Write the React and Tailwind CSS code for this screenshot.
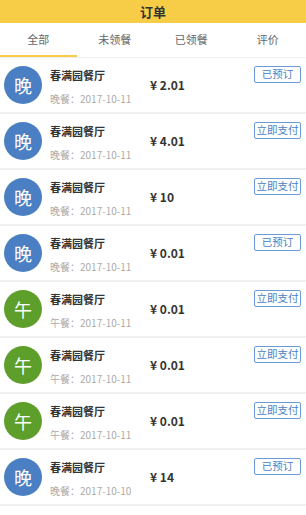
const orders = [
  { meal: "晚", label: "晚餐", date: "2017-10-11", price: "2.01", status: "已预订" },
  { meal: "晚", label: "晚餐", date: "2017-10-11", price: "4.01", status: "立即支付" },
  { meal: "晚", label: "晚餐", date: "2017-10-11", price: "10", status: "立即支付" },
  { meal: "晚", label: "晚餐", date: "2017-10-11", price: "0.01", status: "已预订" },
  { meal: "午", label: "午餐", date: "2017-10-11", price: "0.01", status: "立即支付" },
  { meal: "午", label: "午餐", date: "2017-10-11", price: "0.01", status: "立即支付" },
  { meal: "午", label: "午餐", date: "2017-10-11", price: "0.01", status: "立即支付" },
  { meal: "晚", label: "晚餐", date: "2017-10-10", price: "14", status: "已预订" },
];

const tabs = ["全部", "未领餐", "已领餐", "评价"];

export default function App() {
  return (
    <div
      className="w-[306px] h-[515px] overflow-hidden bg-white"
      style={{ fontFamily: '"Noto Sans CJK SC", "Noto Sans", sans-serif' }}
    >
      <div className="h-[23px] bg-[#f7cd47] flex items-center justify-center text-[13px] font-bold text-[#333]">
        订单
      </div>
      <div className="flex h-[35px] border-b border-[#eeeeee]">
        {tabs.map((t, i) => (
          <div
            key={t}
            className={`flex-1 flex items-center justify-center text-[11px] text-[#666] border-b-2 ${i === 0 ? "border-[#f7cd47]" : "border-transparent"}`}
          >
            {t}
          </div>
        ))}
      </div>
      {orders.map((o, i) => (
        <div key={i} className="flex h-[56px] border-b-2 border-[#f0f0f0]">
          <div
            className={`ml-[4px] mt-[8px] w-[38px] h-[38px] rounded-full flex items-center justify-center text-white text-[18px] ${o.meal === "午" ? "bg-[#5e9f2b]" : "bg-[#4a80c3]"}`}
          >
            {o.meal}
          </div>
          <div className="ml-[8px] w-[100px] flex flex-col pt-[9px]">
            <div className="text-[11px] font-bold text-[#333] leading-[16px]">春满园餐厅</div>
            <div className="text-[10px] text-[#aaa] leading-[14px] mt-[9px]">
              {o.label}：{o.date}
            </div>
          </div>
          <div className="flex items-center text-[12px] font-bold text-[#333]">¥ {o.price}</div>
          <div className="ml-auto mr-[5px] mt-[8px]">
            <div className="h-[17px] w-[47px] border border-[#6a9bd8] rounded-[2px] flex items-center justify-center text-[10.5px] text-[#4a80c3] leading-none">
              {o.status}
            </div>
          </div>
        </div>
      ))}
    </div>
  );
}
